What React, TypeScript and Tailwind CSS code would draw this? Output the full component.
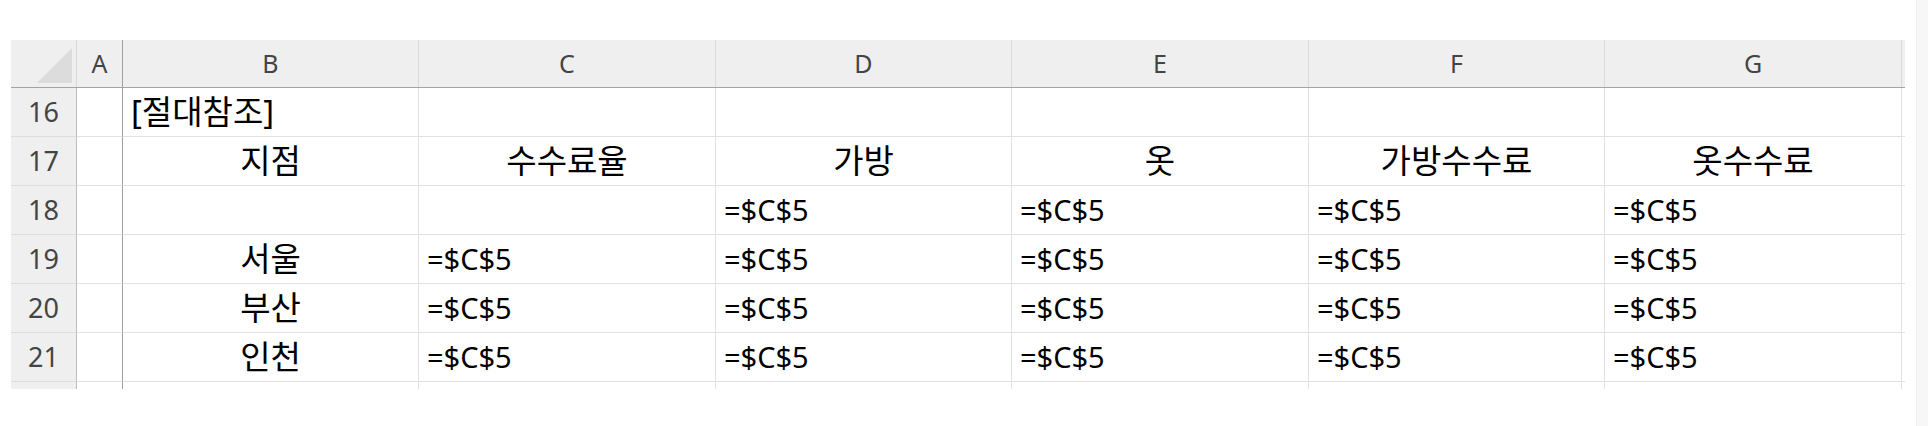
import React from "react";

type Align = "left" | "center";
type Cell = { text: string; align?: Align };

const colLetters = ["A", "B", "C", "D", "E", "F", "G"];
const colWidths = ["w-[46px]", "w-[296px]", "w-[297px]", "w-[296px]", "w-[297px]", "w-[296px]", "w-[297px]"];

const ref = "=$C$5";
const c = (text: string): Cell => ({ text, align: "center" });
const l = (text: string): Cell => ({ text, align: "left" });
const e: Cell = { text: "" };

const rows: { num: number; cells: Cell[] }[] = [
  { num: 16, cells: [e, l("[절대참조]"), e, e, e, e, e] },
  { num: 17, cells: [e, c("지점"), c("수수료율"), c("가방"), c("옷"), c("가방수수료"), c("옷수수료")] },
  { num: 18, cells: [e, e, e, l(ref), l(ref), l(ref), l(ref)] },
  { num: 19, cells: [e, c("서울"), l(ref), l(ref), l(ref), l(ref), l(ref)] },
  { num: 20, cells: [e, c("부산"), l(ref), l(ref), l(ref), l(ref), l(ref)] },
  { num: 21, cells: [e, c("인천"), l(ref), l(ref), l(ref), l(ref), l(ref)] },
];

const cellFont = { fontFamily: '"Noto Sans", "Noto Sans CJK KR", sans-serif' };
const headFont = { fontFamily: '"Noto Sans", "Open Sans", sans-serif' };

const isHangul = (s: string) => /[\uac00-\ud7a3]/.test(s);

function HeaderRow() {
  return (
    <div className="flex h-[48px] border-b border-[#a3a3a3] bg-[#efefef]" style={headFont}>
      <div className="relative w-[66px] shrink-0 border-r border-[#d8d8d8]">
        <svg className="absolute left-[26px] top-[8px]" width="35" height="35" viewBox="0 0 35 35">
          <polygon points="35,0 35,35 0,35" fill="#dcdcdc" />
        </svg>
      </div>
      {colLetters.map((ch, i) => (
        <div
          key={ch}
          className={`${colWidths[i]} shrink-0 flex items-center justify-center text-[25px] text-[#444] ${
            i === 0 ? "border-r border-[#a0a0a0]" : "border-r border-[#dadada]"
          }`}
        >
          {ch}
        </div>
      ))}
      <div className="w-[3px] shrink-0" />
    </div>
  );
}

function Row({ num, cells }: { num: number; cells: Cell[] }) {
  return (
    <div className="flex h-[49px]">
      <div
        className="w-[66px] shrink-0 flex items-center justify-center bg-[#efefef] border-r border-b border-r-[#bdbdbd] border-b-[#dcdcdc] text-[27px] text-[#444]"
        style={headFont}
      >
        {num}
      </div>
      {cells.map((cell, i) => (
        <div
          key={i}
          className={`${colWidths[i]} shrink-0 flex items-center border-b border-b-[#e1e1e1] text-black ${
            isHangul(cell.text) ? "text-[33px]" : "text-[29px]"
          } ${i === 0 ? "border-r border-r-[#a0a0a0]" : "border-r border-r-[#e1e1e1]"} ${
            cell.align === "center" ? "justify-center" : "justify-start pl-[8px]"
          }`}
          style={cellFont}
        >
          {cell.text}
        </div>
      ))}
      <div className="w-[3px] shrink-0 border-b border-b-[#e1e1e1]" />
    </div>
  );
}

export default function App() {
  return (
    <div className="flex h-[426px] w-full bg-white overflow-hidden">
      <main className="flex-1 pt-[40px] pl-[11px]">
        <div className="w-[1894px]">
          <HeaderRow />
          {rows.map(r => (
            <Row key={r.num} num={r.num} cells={r.cells} />
          ))}
          <div className="flex h-[7px]">
            <div className="w-[66px] shrink-0 bg-[#efefef] border-r border-[#bdbdbd]" />
            {colWidths.map((w, i) => (
              <div
                key={i}
                className={`${w} shrink-0 ${i === 0 ? "border-r border-[#a0a0a0]" : "border-r border-[#e1e1e1]"}`}
              />
            ))}
          </div>
        </div>
      </main>
      <aside className="w-[12px] shrink-0 bg-[#f7f7f7] border-l border-[#eeeeee]" />
    </div>
  );
}
